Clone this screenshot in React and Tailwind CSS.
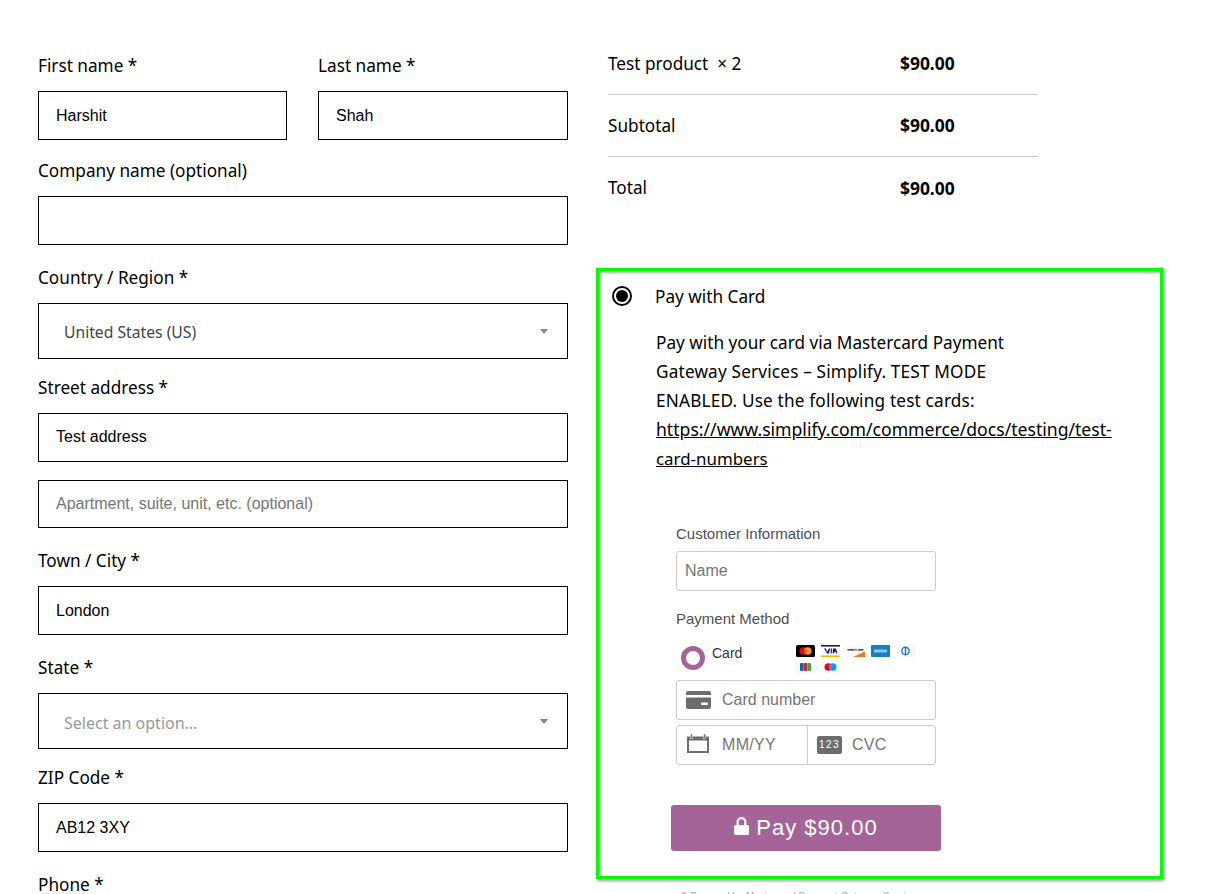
import React from 'react';

const ubuntu = "font-['Noto_Sans',sans-serif]";
const arial = "font-['Liberation_Sans',sans-serif]";

const Label = ({ children }) => (
  <label className="block h-[26px] mb-[13px] text-[17.2px] leading-[27px] text-black">{children}</label>
);

const TextInput = ({ value, placeholder, height = 'h-[49px]', className = '' }) => (
  <input
    readOnly
    value={value}
    placeholder={placeholder}
    className={`block w-full ${height} border border-black bg-white px-[17px] text-base text-black placeholder:text-[#757575] ${arial} ${className}`}
  />
);

const SelectBox = ({ value, muted }) => (
  <div className={`flex items-center justify-between h-[56px] border border-black pl-[25px] pr-[19px] ${muted ? 'text-base text-[#999]' : 'text-[15.7px] text-[#444]'}`}>
    <span className="pt-[4px]">{value}</span>
    <span className="w-0 h-0 border-x-[4px] border-x-transparent border-t-[5px] border-t-[#888]"></span>
  </div>
);

const Field = ({ label, mb, children }) => (
  <div className={mb}>
    <Label>{label}</Label>
    {children}
  </div>
);

const SummaryRow = ({ name, price, line }) => (
  <div className={`flex items-center h-[62px] text-[17.2px] ${line ? 'border-b border-[#ccc]' : ''}`}>
    <span className="w-[292px] whitespace-pre">{name}</span>
    <span className="font-bold text-[17.4px]">{price}</span>
  </div>
);

const Mastercard = () => (
  <svg width="19" height="12" viewBox="0 0 19 12">
    <rect width="19" height="12" rx="1.5" fill="#000" />
    <circle cx="7.3" cy="6" r="3.8" fill="#eb001b" />
    <circle cx="11.7" cy="6" r="3.8" fill="#f79e1b" />
    <path d="M9.5 2.9a3.8 3.8 0 0 1 0 6.2a3.8 3.8 0 0 1 0-6.2z" fill="#ff5f00" />
  </svg>
);

const Visa = () => (
  <svg width="19" height="12" viewBox="0 0 19 12">
    <rect width="19" height="12" fill="#fff" />
    <rect width="19" height="1.6" fill="#1a1f71" />
    <rect y="10.4" width="19" height="1.6" fill="#f7b600" />
    <path d="M3 3.500h2l1 3.600L8 3.500h1.400l-1.600 5H6zM10 3.500h1.200l-.6 5H9.400zM12 3.500h3l1.400 5h-1.200l-.4-1.400h-1.400l-.6 1.400h-1.200z" fill="#1a1f71" />
  </svg>
);

const Discover = () => (
  <svg width="19" height="12" viewBox="0 0 19 12">
    <rect width="19" height="12" fill="#fafafa" />
    <path d="M7 12L19 6.500V12z" fill="#ee7a22" />
    <rect x="1.500" y="4" width="7" height="1.600" fill="#555" />
    <circle cx="10" cy="4.800" r="1.300" fill="#ee7a22" />
    <rect x="12" y="4" width="5.500" height="1.600" fill="#555" />
  </svg>
);

const Amex = () => (
  <svg width="19" height="12" viewBox="0 0 19 12">
    <rect width="19" height="12" rx="1" fill="#1380c4" />
    <rect x="3" y="4.500" width="13" height="3" fill="#8fc4e6" />
  </svg>
);

const Diners = () => (
  <svg width="19" height="12" viewBox="0 0 19 12">
    <rect width="19" height="12" rx="1" fill="#f6f8fb" />
    <circle cx="9.500" cy="6" r="4.400" fill="#1c75bc" />
    <circle cx="9.500" cy="6" r="3" fill="#fff" />
    <rect x="8.800" y="2.500" width="1.400" height="7" fill="#1c75bc" />
  </svg>
);

const Jcb = () => (
  <svg width="19" height="12" viewBox="0 0 19 12">
    <rect width="19" height="12" fill="#fafafa" />
    <rect x="4" y="2" width="3.600" height="8" rx="1" fill="#1e5ba8" />
    <rect x="7.700" y="2" width="3.600" height="8" rx="1" fill="#d3213f" />
    <rect x="11.400" y="2" width="3.600" height="8" rx="1" fill="#3aa648" />
  </svg>
);

const Maestro = () => (
  <svg width="19" height="12" viewBox="0 0 19 12">
    <rect width="19" height="12" fill="#fafafa" />
    <circle cx="7.300" cy="6" r="3.800" fill="#eb001b" />
    <circle cx="11.700" cy="6" r="3.800" fill="#00a2e5" />
    <path d="M9.500 2.900a3.800 3.800 0 0 1 0 6.200a3.800 3.800 0 0 1 0-6.200z" fill="#7375cf" />
  </svg>
);

const CardIcon = () => (
  <svg width="25" height="18" viewBox="0 0 25 18" className="shrink-0">
    <path d="M2 0h21a2 2 0 0 1 2 2v2H0V2a2 2 0 0 1 2-2zM0 6.500h25V16a2 2 0 0 1-2 2H2a2 2 0 0 1-2-2z" fill="#6d6d6d" />
    <rect x="15" y="11.500" width="7" height="2.500" rx="1" fill="#fff" />
  </svg>
);

const CalendarIcon = () => (
  <svg width="22" height="19" viewBox="0 0 22 19" className="shrink-0 -mt-[2px]">
    <path d="M1 3.500h20v14.500H1z" fill="none" stroke="#6d6d6d" strokeWidth="2" />
    <rect x="1" y="3" width="20" height="3.500" fill="#6d6d6d" />
    <rect x="3.500" y="0" width="2" height="4.500" fill="#6d6d6d" stroke="#fff" strokeWidth="0.500" />
    <rect x="16.500" y="0" width="2" height="4.500" fill="#6d6d6d" stroke="#fff" strokeWidth="0.500" />
  </svg>
);

const App = () => {
  return (
    <div className={`h-[894px] overflow-hidden bg-white text-black ${ubuntu}`}>
      <div className="flex items-start pt-[52px] pl-[38px]">
        {/* Billing form */}
        <div className="w-[530px] shrink-0">
          <div className="flex gap-[31px] mb-[17px]">
            <div className="w-[249px]">
              <Label>First name *</Label>
              <TextInput value="Harshit" />
            </div>
            <div className="w-[250px]">
              <Label>Last name *</Label>
              <TextInput value="Shah" />
            </div>
          </div>
          <Field label="Company name (optional)" mb="mb-[19px]">
            <TextInput value="" />
          </Field>
          <Field label="Country / Region *" mb="mb-[15px]">
            <SelectBox value="United States (US)" />
          </Field>
          <Field label="Street address *" mb="mb-[19px]">
            <TextInput value="Test address" className="mb-[18px] pb-[2px]" />
            <TextInput value="" placeholder="Apartment, suite, unit, etc. (optional)" height="h-[48px]" />
          </Field>
          <Field label="Town / City *" mb="mb-[19px]">
            <TextInput value="London" />
          </Field>
          <Field label="State *" mb="mb-[15px]">
            <SelectBox value="Select an option…" muted />
          </Field>
          <Field label="ZIP Code *" mb="mb-[19px]">
            <TextInput value="AB12 3XY" />
          </Field>
          <Label>Phone *</Label>
        </div>

        {/* Order summary and payment */}
        <div className="ml-[28px] w-[567px] shrink-0 -mt-[19px]">
          <div className="ml-[12px] w-[430px] mb-[49px]">
            <SummaryRow name="Test product  × 2" price="$90.00" line />
            <SummaryRow name="Subtotal" price="$90.00" line />
            <SummaryRow name="Total" price="$90.00" />
          </div>

          <div className="h-[611px] border-[3px] border-[#00ff00] shadow-[inset_2px_2px_3px_rgba(0,0,0,0.35),1px_2px_3px_rgba(0,0,0,0.4)] pl-[13px] pt-[15px]">
            <div className="flex items-center h-[20px]">
              <span className="flex items-center justify-center w-[20px] h-[20px] rounded-full border-2 border-black bg-white">
                <span className="w-[12px] h-[12px] rounded-full bg-black"></span>
              </span>
              <span className="ml-[23px] pt-[2px] text-[17.2px]">Pay with Card</span>
            </div>

            <p className="ml-[44px] mt-[23px] w-[460px] text-[17.2px] leading-[28.8px]">
              Pay with your card via Mastercard Payment<br />
              <span className="tracking-[0.18px]">Gateway Services – Simplify. TEST MODE</span><br />
              <span className="tracking-[0.18px]">ENABLED. Use the following test cards:</span><br />
              <a className="underline"><span className="text-[17.6px]">https://www.simplify.com/commerce/docs/testing/test-</span><br /><span className="text-[16.9px]">card-numbers</span></a>
            </p>

            <div className={`ml-[64px] mt-[50px] w-[260px] ${arial}`}>
              <div className="text-[15px] leading-[20px] text-[#4f4f4f]">Customer Information</div>
              <div className="flex items-center mt-[7px] h-[40px] rounded-[3px] border border-[#ccc] pl-[8px] text-base text-[#757575]">Name</div>

              <div className="mt-[18px] text-[15px] leading-[20px] text-[#4f4f4f]">Payment Method</div>

              <div className="flex mt-[6px] h-[46px]">
                <span className="mt-[11px] ml-[5px] w-[24px] h-[24px] rounded-full border-[5px] border-[#a46497]"></span>
                <span className="ml-[7px] mt-[10px] w-[84px] text-sm leading-[16px] text-[#333]">Card</span>
                <div className="flex flex-wrap content-start gap-x-[6px] gap-y-[4px] w-[125px] mt-[10px]">
                  <Mastercard />
                  <Visa />
                  <Discover />
                  <Amex />
                  <Diners />
                  <Jcb />
                  <Maestro />
                </div>
              </div>

              <div className="flex items-center h-[40px] mt-[-1px] rounded-[3px] border border-[#ccc] pl-[9px] text-base text-[#757575]">
                <CardIcon />
                <span className="ml-[11px]">Card number</span>
              </div>

              <div className="flex h-[40px] mt-[5px] rounded-[3px] border border-[#ccc] text-base text-[#757575]">
                <div className="flex items-center w-[131px] border-r border-[#ccc] pl-[10px]">
                  <CalendarIcon />
                  <span className="ml-[13px] tracking-[0.3px]">MM/YY</span>
                </div>
                <div className="flex items-center pl-[9px]">
                  <span className="flex items-center justify-center w-[25px] h-[18px] rounded-[2px] bg-[#6d6d6d] text-[10px] tracking-[1.500px] text-white">123</span>
                  <span className="ml-[10px] tracking-[0.3px]">CVC</span>
                </div>
              </div>

              <button className="flex items-center justify-center gap-[7px] w-[270px] h-[46px] ml-[-5px] mt-[40px] rounded-[3px] bg-[#a46497] text-[22px] tracking-[1px] text-white">
                <svg width="15" height="18" viewBox="0 0 15 18" className="-mt-[3px]">
                  <path d="M2.500 8V5a5 5 0 0 1 10 0v3h1a1.500 1.500 0 0 1 1.500 1.500v7a1.500 1.500 0 0 1-1.500 1.500h-12A1.500 1.500 0 0 1 0 16.500v-7A1.500 1.500 0 0 1 1.500 8zm2.300 0h5.400V5a2.700 2.700 0 0 0-5.400 0z" fill="#fff" />
                </svg>
                Pay $90.00
              </button>
            </div>
          </div>

          <div className={`ml-[84px] mt-[12px] text-[10px] leading-[12px] text-[#aaa] ${arial}`}>© Powered by Mastercard Payment Gateway Services</div>
        </div>
      </div>
    </div>
  );
};

export default App;
